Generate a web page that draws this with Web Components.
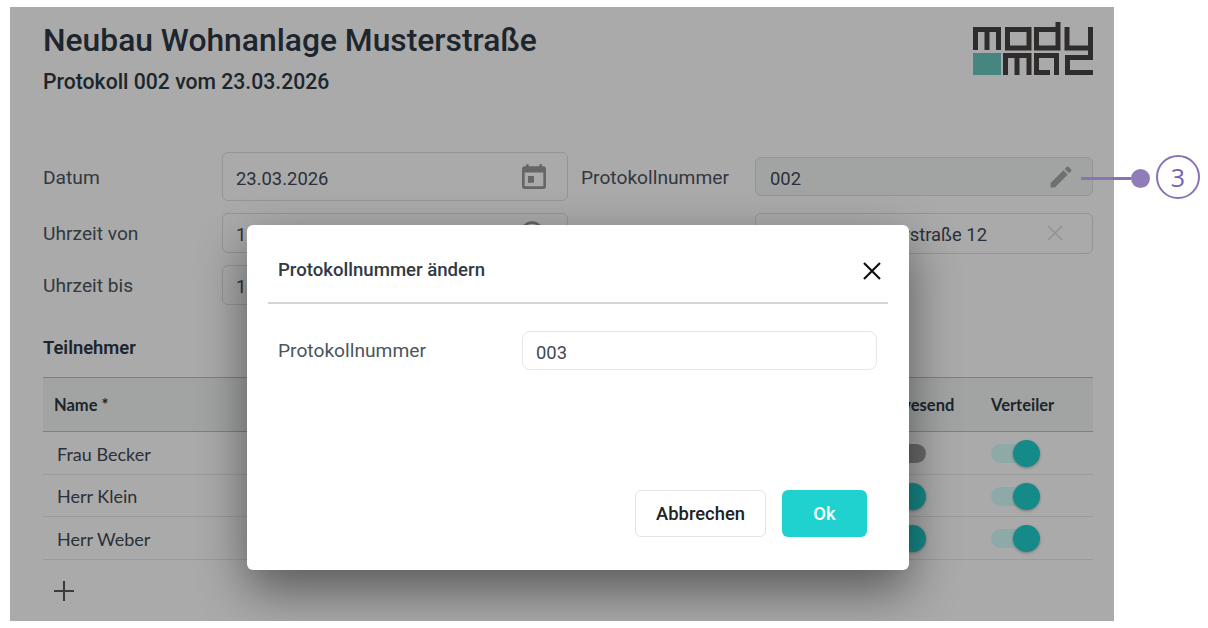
<!doctype html>
<html lang="de">
<head>
<meta charset="utf-8">
<title>Protokoll</title>
<style>
  body { margin: 0; background: #fff; font-family: Roboto, sans-serif; }
</style>
</head>
<body>
<protocol-screen>
  <page-title slot="title" heading="Neubau Wohnanlage Musterstraße" sub="Protokoll 002 vom 23.03.2026"></page-title>

  <form-grid slot="form">
    <form-label>Datum</form-label>
    <form-field class="tall" icon="calendar">23.03.2026</form-field>
    <form-label>Protokollnummer</form-label>
    <form-field class="short" icon="pencil" tinted>002</form-field>

    <form-label>Uhrzeit von</form-label>
    <form-field class="clock" icon="clock">1</form-field>
    <form-label></form-label>
    <form-field class="wide" icon="clear" inset="83">Musterstraße 12</form-field>

    <form-label>Uhrzeit bis</form-label>
    <form-field>1</form-field>
  </form-grid>

  <member-table slot="table">
    <member-row name="Frau Becker" present="off" mail="on"></member-row>
    <member-row name="Herr Klein" present="on" mail="on"></member-row>
    <member-row name="Herr Weber" present="on" mail="on"></member-row>
  </member-table>

  <modal-dialog slot="modal" heading="Protokollnummer ändern">
    <span slot="label">Protokollnummer</span>
    <span slot="value">003</span>
  </modal-dialog>

  <call-out slot="callout" number="3"></call-out>
</protocol-screen>

<script>
const ICONS = {
  calendar: '<svg width="32" height="32" viewBox="0 0 24 24" fill="#999"><path fill-rule="evenodd" d="M19 4h-1V2.500h-2V4H8V2.500H6V4H5a2 2 0 0 0-2 2v13a2 2 0 0 0 2 2h14a2 2 0 0 0 2-2V6a2 2 0 0 0-2-2zm0 15H5V8.700h14V19zM7.500 11.300H12v5H7.500z"/></svg>',
  pencil: '<svg width="28" height="28" viewBox="0 0 24 24" fill="#a8a8a8"><path d="M3 17.250V21h3.750L17.810 9.940l-3.750-3.750L3 17.250zM20.710 7.040a1 1 0 0 0 0-1.410l-2.340-2.340a1 1 0 0 0-1.410 0l-1.830 1.830 3.750 3.750 1.830-1.830z"/></svg>',
  clock: '<svg width="28" height="28" viewBox="0 0 24 24" fill="none" stroke="#999" stroke-width="2"><circle cx="12" cy="12" r="9"/><path d="M12 7v5l3 2"/></svg>',
  clear: '<svg width="16" height="16" viewBox="0 0 16 16" stroke="#dcdcdc" stroke-width="1.600"><path d="M1 1l14 14M15 1L1 15"/></svg>'
};

class ProtocolScreen extends HTMLElement {
  constructor() {
    super();
    this.attachShadow({ mode: "open" }).innerHTML = `
      <style>
        :host { display: block; padding: 7px 0 0 10px; position: relative; height: 621px; box-sizing: border-box; }
        .panel { position: relative; width: 1104px; height: 614px; box-sizing: border-box; padding: 0 21px 0 33px; background: #fff; overflow: hidden; }
        .scrim { position: absolute; inset: 0; background: rgba(0,0,0,.333); }
        .top { display: flex; justify-content: space-between; align-items: flex-start; height: 145px; }
        .logo { margin-top: 15px; }
      </style>
      <div class="panel">
        <div class="top">
          <slot name="title"></slot>
          <svg class="logo" width="121" height="54" viewBox="0 0 121 54" fill="none" stroke="#474242" stroke-width="5">
            <path d="M3.500 28V7.500H26.500V28M15 7.500V28"/>
            <path d="M35.500 7.500H57V26H35.500Z"/>
            <path d="M86 0V26H64.500V7.500H86"/>
            <path d="M95 5V26H118.500M118.500 5V35.500H95.500V50.500H121"/>
            <rect x="1" y="31" width="28" height="22" fill="#6ac8c0" stroke="none"/>
            <path d="M33.500 53V33.500H57V53M45 33.500V53"/>
            <path d="M84.500 53V33.500H64.500V50.500H78"/>
          </svg>
        </div>
        <slot name="form"></slot>
        <slot name="table"></slot>
        <div class="scrim"></div>
        <slot name="modal"></slot>
      </div>
      <slot name="callout"></slot>`;
  }
}

class PageTitle extends HTMLElement {
  constructor() {
    super();
    this.attachShadow({ mode: "open" }).innerHTML = `
      <style>
        :host { display: block; color: #2d3843; }
        h1 { margin: 14px 0 0; font: 500 31.800px/38px Roboto, sans-serif; }
        h2 { margin: 10px 0 0; font: 500 21.200px/26px Roboto, sans-serif; }
      </style>
      <h1></h1><h2></h2>`;
    this.shadowRoot.querySelector("h1").textContent = this.getAttribute("heading");
    this.shadowRoot.querySelector("h2").textContent = this.getAttribute("sub");
  }
}

class FormGrid extends HTMLElement {
  constructor() {
    super();
    this.attachShadow({ mode: "open" }).innerHTML = `
      <style>
        :host { display: grid; grid-template-columns: 179px 346px 187px 338px; row-gap: 11.500px; align-items: center; }
      </style>
      <slot></slot>`;
  }
}

class FormLabel extends HTMLElement {
  constructor() {
    super();
    this.attachShadow({ mode: "open" }).innerHTML = `
      <style>
        :host { display: block; padding-top: 2px; font: 400 19.200px/24px Roboto, sans-serif; color: #4a5560; }
        :host(:nth-of-type(2)) { padding-left: 13px; }
      </style>
      <slot></slot>`;
  }
}

class FormField extends HTMLElement {
  constructor() {
    super();
    const icon = ICONS[this.getAttribute("icon")] || "";
    const inset = this.getAttribute("inset") || 0;
    this.attachShadow({ mode: "open" }).innerHTML = `
      <style>
        :host { display: flex; align-items: center; height: 40px; box-sizing: border-box; border: 1px solid #dfe0e1; border-radius: 6px; padding: 0 17px 0 13px; font: 400 18.400px/24px Roboto, sans-serif; color: #3f4a55; }
        :host(.tall) { height: 49px; }
        :host(.short) { height: 39px; padding-left: 14px; }
        :host(.wide) { height: 41px; padding-right: 29px; }
        :host(.clock) { padding-right: 21px; }
        :host([tinted]) { background: #f4f7f6; }
        .text { flex: 1; padding-top: 4px; padding-left: ${inset}px; }
        .icon { display: flex; }
      </style>
      <span class="text"><slot></slot></span><span class="icon">${icon}</span>`;
  }
}

class ToggleSwitch extends HTMLElement {
  constructor() {
    super();
    this.attachShadow({ mode: "open" }).innerHTML = `
      <style>
        :host { display: block; position: relative; width: 49px; height: 19px; margin-top: 2px; border-radius: 10px; background: #d6fffc; }
        :host([state="off"]) { background: #a0a0a0; }
        .knob { position: absolute; left: 22px; top: -4px; width: 27px; height: 27px; border-radius: 50%; background: #22d0cc; box-shadow: 0 1px 3px rgba(0,0,0,.3); }
        :host([state="off"]) .knob { left: 0; background: #fff; }
      </style>
      <div class="knob"></div>`;
  }
}

class MemberTable extends HTMLElement {
  constructor() {
    super();
    this.attachShadow({ mode: "open" }).innerHTML = `
      <style>
        :host { display: block; margin-top: 31px; }
        .caption { font: 600 18.400px/24px Roboto, sans-serif; color: #2d3843; }
        .head { display: grid; grid-template-columns: 1fr 114px 102px; align-items: center; height: 53px; margin-top: 17px; border-top: 1px solid #bcc0c4; border-bottom: 1px solid #bcc0c4; background: #f4f7f6; font: 700 16.500px/20px Lato, sans-serif; color: #2d3843; }
        .head span:first-child { padding-left: 11px; }
        .add { display: block; margin: 21px 0 0 11px; }
      </style>
      <div class="caption">Teilnehmer</div>
      <div class="head"><span>Name *</span><span>Anwesend</span><span>Verteiler</span></div>
      <slot></slot>
      <svg class="add" width="20" height="20" viewBox="0 0 20 20" stroke="#555b62" stroke-width="2"><path d="M10 0v20M0 10h20"/></svg>`;
  }
}

class MemberRow extends HTMLElement {
  constructor() {
    super();
    this.attachShadow({ mode: "open" }).innerHTML = `
      <style>
        :host { display: grid; grid-template-columns: 1fr 114px 102px; align-items: center; height: 42.500px; box-sizing: border-box; border-bottom: 1px solid #e8eaea; font: 400 18px/24px Lato, sans-serif; color: #3f4a55; }
        .name { padding: 2px 0 0 14px; }
      </style>
      <span class="name"></span>
      <toggle-switch state="${this.getAttribute("present")}"></toggle-switch>
      <toggle-switch state="${this.getAttribute("mail")}"></toggle-switch>`;
    this.shadowRoot.querySelector(".name").textContent = this.getAttribute("name");
  }
}

class ModalDialog extends HTMLElement {
  constructor() {
    super();
    this.attachShadow({ mode: "open" }).innerHTML = `
      <style>
        :host { display: flex; flex-direction: column; position: absolute; left: 237px; top: 218px; width: 662px; height: 345px; box-sizing: border-box; padding: 0 21px; background: #fff; border-radius: 6px; box-shadow: 0 20px 50px rgba(0,0,0,.48); font-family: Roboto, sans-serif; }
        .head { display: flex; justify-content: space-between; align-items: center; height: 79px; padding: 12px 6px 0 10px; box-sizing: border-box; border-bottom: 2px solid #d4d4d4; font: 500 18.600px/24px Roboto, sans-serif; color: #2f3a45; }
        .head svg { margin-top: 3px; }
        .body { display: grid; grid-template-columns: 244px 355px; align-items: center; margin: 27px 0 0 10px; font: 400 19.200px/24px Roboto, sans-serif; color: #4a5560; }
        .input { display: block; height: 39px; box-sizing: border-box; border: 1px solid #e6e6e6; border-radius: 8px; padding: 9px 13px; font-size: 18.400px; color: #3f4a55; }
        .actions { display: flex; justify-content: flex-end; gap: 16px; margin-top: auto; padding: 0 21px 33px 0; }
        button { height: 47px; box-sizing: border-box; border-radius: 6px; font: 500 18.400px/24px Roboto, sans-serif; cursor: pointer; }
        .cancel { width: 131px; background: #fff; border: 1px solid #e4e4e4; color: #222; }
        .ok { width: 85px; background: #1fd2cf; border: 0; color: #fff; }
      </style>
      <div class="head">
        <span class="title"></span>
        <svg width="20" height="20" viewBox="0 0 20 20" stroke="#111" stroke-width="2.200"><path d="M2 2l16 16M18 2L2 18"/></svg>
      </div>
      <div class="body">
        <slot name="label"></slot>
        <span class="input"><slot name="value"></slot></span>
      </div>
      <div class="actions">
        <button class="cancel">Abbrechen</button>
        <button class="ok">Ok</button>
      </div>`;
    this.shadowRoot.querySelector(".title").textContent = this.getAttribute("heading");
  }
}

class CallOut extends HTMLElement {
  constructor() {
    super();
    this.attachShadow({ mode: "open" }).innerHTML = `
      <style>
        :host { display: flex; align-items: center; position: absolute; left: 1081px; top: 155px; height: 44px; }
        .line { width: 50px; height: 2.500px; background: #8a73b5; margin-top: 3px; }
        .dot { width: 19px; height: 19px; border-radius: 50%; background: #8f7cb8; margin-top: 3px; }
        .badge { display: flex; align-items: center; justify-content: center; width: 44px; height: 44px; box-sizing: border-box; margin-left: 6px; border: 2.400px solid #8a73b5; border-radius: 50%; font: 500 25px/1 "Open Sans", sans-serif; color: #7a62ad; }
      </style>
      <div class="line"></div><div class="dot"></div><div class="badge">${this.getAttribute("number")}</div>`;
  }
}

customElements.define("protocol-screen", ProtocolScreen);
customElements.define("page-title", PageTitle);
customElements.define("form-grid", FormGrid);
customElements.define("form-label", FormLabel);
customElements.define("form-field", FormField);
customElements.define("toggle-switch", ToggleSwitch);
customElements.define("member-table", MemberTable);
customElements.define("member-row", MemberRow);
customElements.define("modal-dialog", ModalDialog);
customElements.define("call-out", CallOut);
</script>
</body>
</html>
